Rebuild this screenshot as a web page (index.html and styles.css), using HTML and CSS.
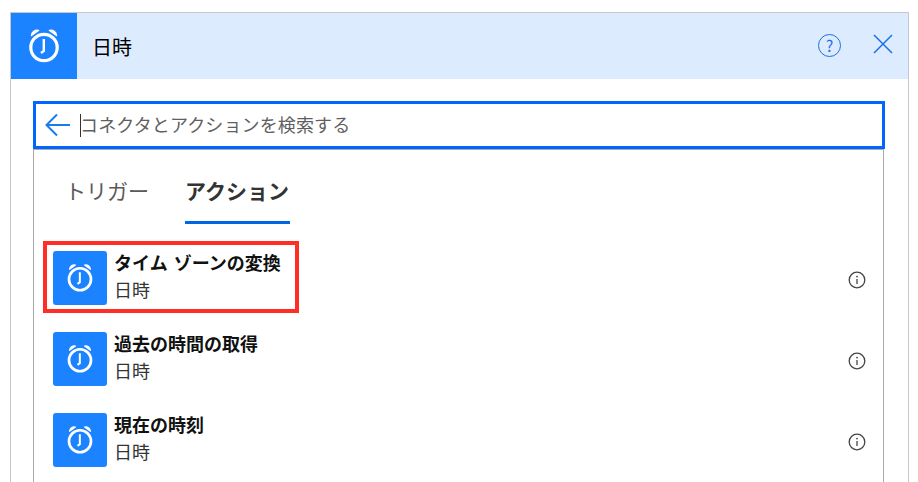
FILE: index.html
```html
<!DOCTYPE html>
<html lang="ja">
<head>
    <meta charset="UTF-8">
    <meta name="viewport" content="width=device-width, initial-scale=1.0">
    <title>日時</title>
    <link rel="stylesheet" href="styles.css">
</head>
<body>

    <svg class="defs" width="0" height="0" aria-hidden="true">
        <symbol id="clock" viewBox="0 0 36 36">
            <circle cx="18" cy="19.5" r="13.2" fill="none" stroke="#fff" stroke-width="3.2"/>
            <path d="M5.500 7.500C5.800 3.800 9 1.800 12.500 2.500ZM30.500 7.500C30.200 3.800 27 1.800 23.500 2.500Z" fill="#fff" stroke="#fff" stroke-width="1.500" stroke-linejoin="round"/>
            <path d="M17.800 11V23L15 25" fill="none" stroke="#fff" stroke-width="2.400"/>
        </symbol>
        <symbol id="info" viewBox="0 0 18 18">
            <circle cx="9" cy="9" r="7.8" fill="none" stroke="#444" stroke-width="1.3"/>
            <path d="M9 8V13" stroke="#444" stroke-width="1.3"/>
            <circle cx="9" cy="5.6" r="0.9" fill="#444"/>
        </symbol>
    </svg>

    <div class="card">
        <div class="card-head">
            <div class="head-icon"><svg width="36" height="36"><use href="#clock"/></svg></div>
            <div class="head-title">日時</div>
            <div class="help">?</div>
            <svg class="close" width="20" height="20" viewBox="0 0 20 20">
                <path d="M1 1L19 19M19 1L1 19" stroke="#1a6fe8" stroke-width="1.5"/>
            </svg>
        </div>

        <div class="search">
            <svg class="back" width="26" height="24" viewBox="0 0 26 24">
                <path d="M25 12H2M12 1.500L1.500 12L12 22.500" fill="none" stroke="#1a7bf0" stroke-width="2"/>
            </svg>
            <span class="caret"></span>
            <span class="placeholder">コネクタとアクションを検索する</span>
        </div>

        <div class="panel">
            <div class="tabs">
                <div class="tab">トリガー</div>
                <div class="tab active">アクション</div>
            </div>

            <div class="list">
                <div class="marker"></div>

                <div class="row">
                    <div class="row-icon"><svg width="30" height="30"><use href="#clock"/></svg></div>
                    <div class="row-text">
                        <div class="row-title">タイム ゾーンの変換</div>
                        <div class="row-sub">日時</div>
                    </div>
                    <svg class="row-info" width="18" height="18"><use href="#info"/></svg>
                </div>

                <div class="row">
                    <div class="row-icon"><svg width="30" height="30"><use href="#clock"/></svg></div>
                    <div class="row-text">
                        <div class="row-title">過去の時間の取得</div>
                        <div class="row-sub">日時</div>
                    </div>
                    <svg class="row-info" width="18" height="18"><use href="#info"/></svg>
                </div>

                <div class="row">
                    <div class="row-icon"><svg width="30" height="30"><use href="#clock"/></svg></div>
                    <div class="row-text">
                        <div class="row-title">現在の時刻</div>
                        <div class="row-sub">日時</div>
                    </div>
                    <svg class="row-info" width="18" height="18"><use href="#info"/></svg>
                </div>
            </div>
        </div>
    </div>

</body>
</html>
```

FILE: styles.css
```css
/* Basic Reset */
* {
    margin: 0;
    padding: 0;
    box-sizing: border-box;
}

html,
body {
    height: 482px;
    overflow: hidden;
}

body {
    font-family: "Noto Sans CJK JP", "Noto Sans", sans-serif;
    background-color: #ffffff;
    color: #111111;
    padding: 12px 9px 0 10px;
}

.defs {
    position: absolute;
}

.card {
    height: 470px;
    border: 1px solid #c8c8c8;
    border-bottom: none;
}

/* Header */
.card-head {
    display: flex;
    align-items: center;
    height: 66px;
    background-color: #dcebfe;
}

.head-icon {
    display: flex;
    align-items: center;
    justify-content: center;
    width: 66px;
    height: 66px;
    background-color: #1b83ff;
}

.head-title {
    margin-left: 15px;
    font-size: 20px;
    color: #000000;
}

.help {
    width: 23px;
    height: 23px;
    margin-left: auto;
    margin-top: -2px;
    border: 1.500px solid #1a6fe8;
    border-radius: 50%;
    font-size: 16px;
    line-height: 20px;
    text-align: center;
    color: #1a6fe8;
}

.close {
    margin: -4px 15px 0 32px;
}

/* Search box */
.search {
    display: flex;
    align-items: center;
    height: 48px;
    margin: 22px 23px 0 22px;
    padding-left: 9px;
    border: 3px solid #0066ff;
}

.back {
    flex: none;
}

.caret {
    width: 1px;
    height: 23px;
    margin-left: 9px;
    margin-right: -1px;
    background-color: #333333;
}

.placeholder {
    margin-top: -2px;
    font-size: 18px;
    letter-spacing: 0.13px;
    color: #5f5f5f;
}

/* Panel under the search box */
.panel {
    height: 333px;
    margin: 0 24px 0 22px;
    border: 1px solid #aaaaaa;
    border-bottom: none;
}

.tabs {
    display: flex;
    gap: 36px;
    padding: 16px 0 0 31px;
}

.tab {
    height: 58px;
    padding-top: 9px;
    font-size: 21px;
    line-height: 30px;
    color: #5a5a5a;
}

.tab.active {
    width: 105px;
    font-weight: 700;
    color: #333333;
    border-bottom: 3px solid #0066e6;
}

/* Action list */
.list {
    position: relative;
    display: flex;
    flex-direction: column;
    gap: 27px;
    padding: 27px 17px 0 19px;
}

.marker {
    position: absolute;
    left: 9px;
    top: 17px;
    width: 256px;
    height: 72px;
    border: 4px solid #ff2d23;
}

.row {
    display: flex;
    height: 54px;
}

.row-icon {
    display: flex;
    align-items: center;
    justify-content: center;
    width: 54px;
    height: 54px;
    background-color: #1b83ff;
    border-radius: 3px;
}

.row-text {
    margin-top: -2px;
    margin-left: 7px;
}

.row-title {
    font-size: 18px;
    font-weight: 700;
    line-height: 27px;
    word-spacing: 2px;
    color: #111111;
}

.row-sub {
    font-size: 18px;
    line-height: 27px;
    color: #333333;
}

.row-info {
    margin-left: auto;
    margin-top: 20px;
}
```
